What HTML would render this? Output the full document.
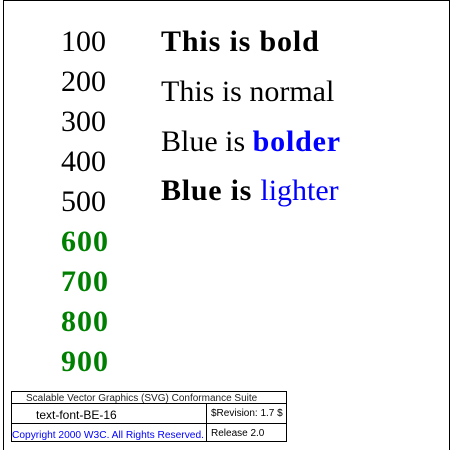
<!DOCTYPE html>
<html><head><style>html,body{margin:0;padding:0;background:#fff}svg{display:block}</style></head><body>
<svg width="450" height="450" viewBox="0 0 450 450" xmlns="http://www.w3.org/2000/svg">
<rect x="3.5" y="0.5" width="446" height="460" fill="none" stroke="#000"/>
<g font-family="'Liberation Serif',serif" font-size="30">
<text x="61" y="51">100</text>
<text x="61" y="91">200</text>
<text x="61" y="131">300</text>
<text x="61" y="171">400</text>
<text x="61" y="211">500</text>
<g fill="green" font-weight="bold" letter-spacing="1">
<text x="61" y="251">600</text>
<text x="61" y="291">700</text>
<text x="61" y="331">800</text>
<text x="61" y="371">900</text>
</g>
<text x="161" y="51" font-weight="bold" letter-spacing="0.85">This is bold</text>
<text x="161" y="101">This is normal</text>
<text x="161" y="151">Blue is <tspan fill="blue" font-weight="bold" letter-spacing="0.8">bolder</tspan></text>
<text x="161" y="200"><tspan font-weight="bold" letter-spacing="0.75">Blue is </tspan><tspan fill="blue">lighter</tspan></text>
</g>
<g fill="none" stroke="#000">
<rect x="11.5" y="391.5" width="275" height="50"/>
<line x1="11" y1="403.5" x2="287" y2="403.5"/>
<line x1="11" y1="423.5" x2="287" y2="423.5"/>
<line x1="206.5" y1="403" x2="206.5" y2="442"/>
</g>
<g font-family="'Liberation Sans',sans-serif">
<text x="26" y="401" font-size="10" fill="#222">Scalable Vector Graphics (SVG) Conformance Suite</text>
<text x="36" y="419" font-size="12">text-font-BE-16</text>
<text x="12" y="438" font-size="10.2" fill="blue">Copyright 2000 W3C. All Rights Reserved.</text>
<text x="211" y="416" font-size="10">$Revision: 1.7 $</text>
<text x="211" y="436" font-size="10">Release 2.0</text>
</g>
</svg>
</body></html>
